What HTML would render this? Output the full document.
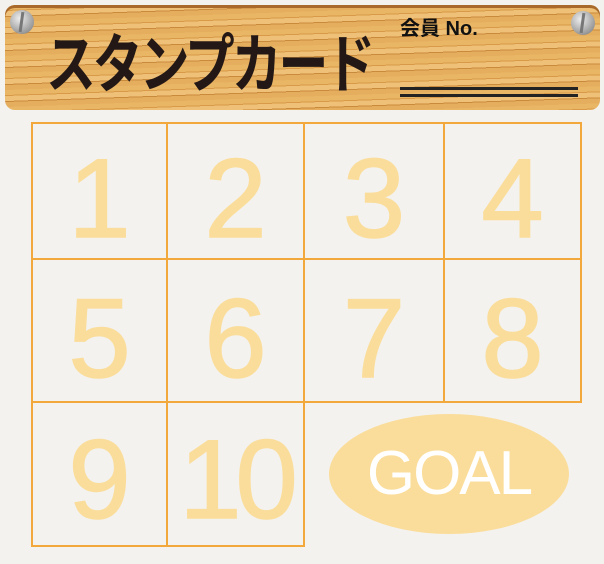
<!DOCTYPE html>
<html><head><meta charset="utf-8"><style>
body{margin:0;width:604px;height:564px;background:#f3f2ee;position:relative;overflow:hidden;font-family:"Liberation Sans","Noto Sans CJK JP",sans-serif}
.board{position:absolute;left:5px;top:5px;width:595px;height:105px;border-radius:10px;
background:repeating-linear-gradient(178deg,#e9b665 0 5px,#d89a48 5px 6px,#eec078 6px 11px,#c98a3c 11px 12px,#e5ad5e 12px 17px);
box-shadow:inset 0 3px 0 #a8692a}
.screw{position:absolute;width:24px;height:24px;border-radius:50%;background:radial-gradient(circle at 40% 35%,#eee,#999 70%,#666)}
.screw:after{content:"";position:absolute;left:10px;top:2px;width:3px;height:20px;background:#777;transform:rotate(8deg)}
.title{position:absolute;left:46px;top:14px;font-size:64px;font-weight:bold;color:#231815;letter-spacing:-4px;transform:scaleX(0.78);transform-origin:left;white-space:nowrap}
.no{position:absolute;left:400px;top:12px;font-size:20px;font-weight:bold;color:#111}
.ln{position:absolute;left:400px;width:178px;height:3px;background:#222}
.grid{position:absolute;border:2px solid #f2a83a;box-sizing:border-box}
.num{position:absolute;color:#fbdd9b;font-size:112px;text-align:center;line-height:1;-webkit-text-stroke:1.5px #fbdd9b}
.goal{position:absolute;left:329px;top:414px;width:240px;height:120px;border-radius:50%;background:#fbdd9b;color:#fff;font-size:62px;text-align:center;line-height:120px;letter-spacing:-2px}
</style></head><body>
<div class="board"></div>
<div class="screw" style="left:10px;top:10px"></div>
<div class="screw" style="left:571px;top:11px"></div>
<div class="title">スタンプカード</div>
<div class="no">会員 No.</div>
<div class="ln" style="top:87px"></div>
<div class="ln" style="top:94px"></div>

<div class="grid" style="left:31px;top:122px;width:551px;height:281px"></div>
<div class="grid" style="left:31px;top:122px;width:137px;height:425px"></div>
<div class="grid" style="left:166px;top:122px;width:139px;height:425px"></div>
<div class="grid" style="left:303px;top:122px;width:142px;height:281px"></div>
<div class="grid" style="left:31px;top:258px;width:551px;height:145px;border-left:none;border-right:none"></div>

<div class="num" style="left:31px;top:143px;width:137px">1</div>
<div class="num" style="left:166px;top:143px;width:139px">2</div>
<div class="num" style="left:303px;top:143px;width:142px">3</div>
<div class="num" style="left:443px;top:143px;width:139px">4</div>
<div class="num" style="left:31px;top:283px;width:137px">5</div>
<div class="num" style="left:166px;top:283px;width:139px">6</div>
<div class="num" style="left:303px;top:283px;width:142px">7</div>
<div class="num" style="left:443px;top:283px;width:139px">8</div>
<div class="num" style="left:31px;top:424px;width:137px">9</div>
<div class="num" style="left:166px;top:424px;width:139px;letter-spacing:-6px">10</div>
<div class="goal">GOAL</div>
</body></html>
